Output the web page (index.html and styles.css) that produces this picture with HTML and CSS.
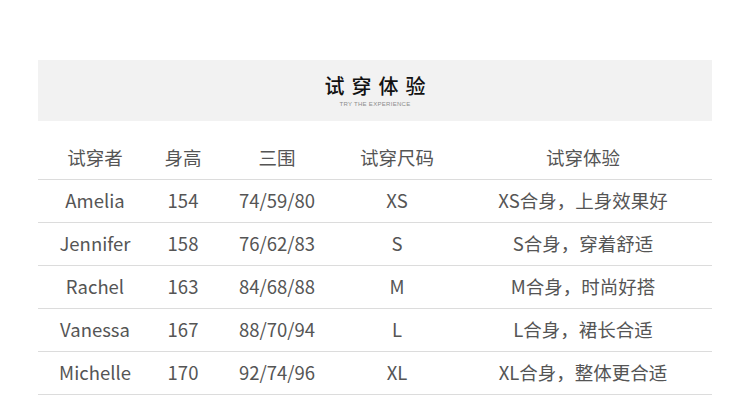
FILE: index.html
```html
<!DOCTYPE html>
<html lang="zh-CN">
<head>
<meta charset="utf-8">
<title>试穿体验</title>
<link rel="stylesheet" href="styles.css">
</head>
<body>
<div class="page">
  <div class="banner">
    <div class="banner-title">试穿体验</div>
    <div class="banner-sub">TRY THE EXPERIENCE</div>
  </div>
  <table class="fit-table">
    <colgroup>
      <col class="c1"><col class="c2"><col class="c3"><col class="c4"><col class="c5">
    </colgroup>
    <thead>
      <tr><th>试穿者</th><th>身高</th><th>三围</th><th>试穿尺码</th><th>试穿体验</th></tr>
    </thead>
    <tbody>
      <tr><td>Amelia</td><td>154</td><td>74/59/80</td><td>XS</td><td>XS合身，上身效果好</td></tr>
      <tr><td>Jennifer</td><td>158</td><td>76/62/83</td><td>S</td><td>S合身，穿着舒适</td></tr>
      <tr><td>Rachel</td><td>163</td><td>84/68/88</td><td>M</td><td>M合身，时尚好搭</td></tr>
      <tr><td>Vanessa</td><td>167</td><td>88/70/94</td><td>L</td><td>L合身，裙长合适</td></tr>
      <tr><td>Michelle</td><td>170</td><td>92/74/96</td><td>XL</td><td>XL合身，整体更合适</td></tr>
    </tbody>
  </table>
</div>
</body>
</html>
```

FILE: styles.css
```css
html, body {
  margin: 0;
  padding: 0;
  background: #fff;
}
.page {
  width: 674px;
  margin: 0 auto;
  padding-top: 60px;
  font-family: "Noto Sans CJK SC", "Noto Sans", sans-serif;
}
.banner {
  height: 61px;
  box-sizing: border-box;
  padding-top: 16px;
  background: #f2f2f2;
  display: flex;
  flex-direction: column;
  align-items: center;
  gap: 4px;
}
.banner-title {
  font-size: 20px;
  line-height: 20px;
  font-weight: 500;
  letter-spacing: 7px;
  margin-right: -7px;
  color: #111;
}
.banner-sub {
  font-family: "Liberation Sans", sans-serif;
  font-size: 6px;
  line-height: 8px;
  color: #8c8c8c;
  letter-spacing: 0.3px;
}
.fit-table {
  width: 674px;
  border-collapse: collapse;
  margin-top: 15px;
  table-layout: fixed;
}
.c1 { width: 114px; }
.c2 { width: 62px; }
.c3 { width: 126px; }
.c4 { width: 114px; }
.c5 { width: 258px; }
.fit-table th,
.fit-table td {
  height: 43px;
  padding: 0 0 1px;
  box-sizing: border-box;
  text-align: center;
  font-size: 18.5px;
  font-weight: normal;
  color: #555;
  border-bottom: 1px solid #dcdcdc;
  white-space: nowrap;
}
```
